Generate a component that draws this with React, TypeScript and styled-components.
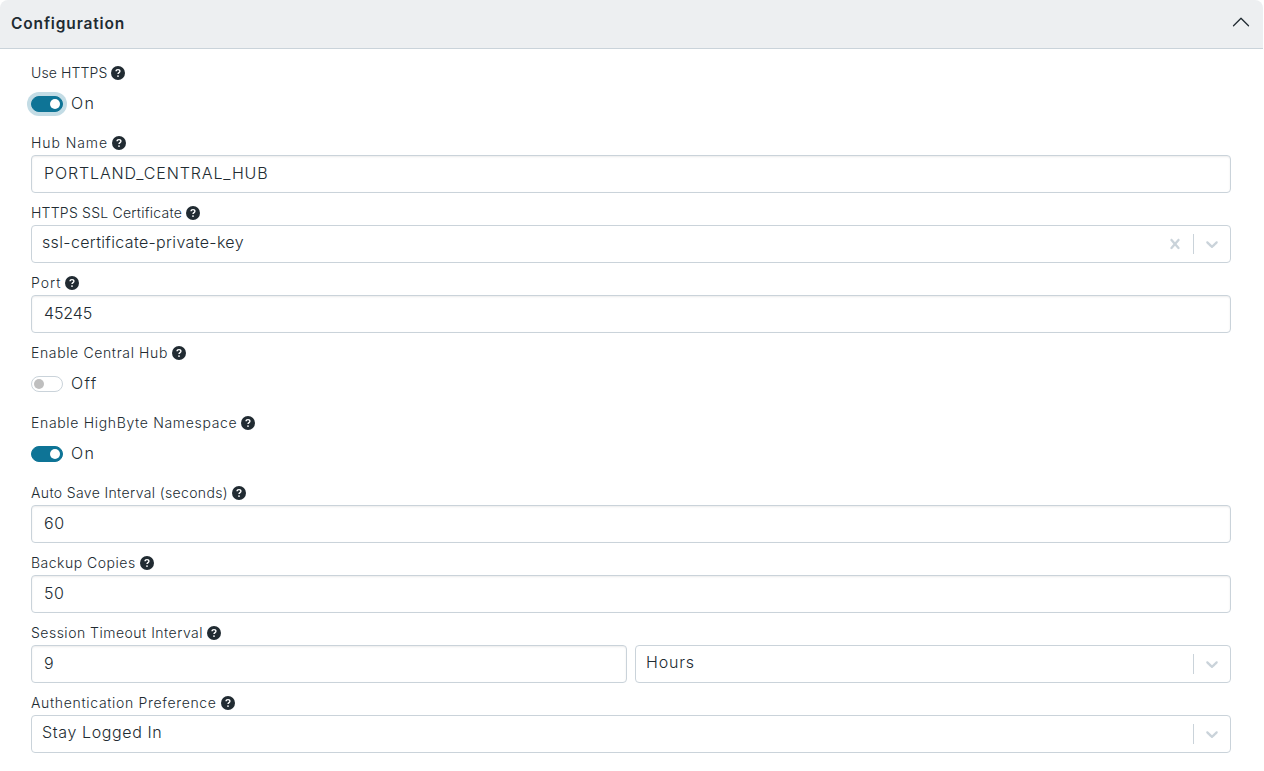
import { useState } from 'react';
import { BsChevronUp } from 'react-icons/bs';
import styled, { createGlobalStyle, css } from 'styled-components';

const BORDER = '#cad3da';
const TEXT = '#212b32';
const TEAL = '#0e7496';

interface ITracked {
  $tracking?: number;
}
interface ILabel {
  text: string;
  tracking: number;
}
interface ITextField {
  value: string;
  tracking: number;
}
interface ISelectField extends ITextField {
  clearable?: boolean;
}
interface IToggle {
  initial: boolean;
  focused?: boolean;
}

const GlobalStyle = createGlobalStyle`
  *, *::before, *::after {
    box-sizing: border-box;
  }
  body {
    margin: 0;
    background: #fff;
    color: ${TEXT};
    font-family: Inter, 'Open Sans', sans-serif;
    font-size: 16px;
    font-weight: 300;
    line-height: 24px;
  }
`;

const Panel = styled.section`
  width: 1263px;
`;

const PanelHeader = styled.header`
  display: flex;
  align-items: center;
  justify-content: space-between;
  height: 49px;
  padding: 0 12px 0 11px;
  border-bottom: 1px solid ${BORDER};
  border-radius: 8px 8px 0 0;
  background: #edeff1;
`;

const Title = styled.h2`
  margin: 0;
  font-size: 15.5px;
  font-weight: 600;
  letter-spacing: 0.85px;
`;

const CollapseIcon = styled(BsChevronUp)`
  width: 20px;
  height: 20px;
  margin-top: -5px;
`;

const PanelBody = styled.div`
  display: flex;
  flex-direction: column;
  gap: 10px;
  padding: 14px 32px 0 31px;
`;

const Field = styled.div`
  display: flex;
  flex-direction: column;
  gap: 2px;
`;

const LabelRow = styled.label<ITracked>`
  display: flex;
  align-items: center;
  gap: 4px;
  height: 20px;
  font-size: 14px;
  line-height: 20px;
  letter-spacing: ${(props) => props.$tracking}px;
`;

const HelpSvg = styled.svg`
  width: 14px;
  height: 14px;
  flex-shrink: 0;
`;

const controlBox = css`
  width: 100%;
  height: 38px;
  border: 1px solid ${BORDER};
  border-radius: 4px;
  background: #fff;
`;

const Input = styled.input<ITracked>`
  ${controlBox}
  padding: 0 12px 2px;
  box-shadow: inset 0 1px 2px rgba(0, 0, 0, 0.075);
  color: ${TEXT};
  font: inherit;
  letter-spacing: ${(props) => props.$tracking}px;
  outline: none;
`;

const SelectBox = styled.div`
  ${controlBox}
  display: flex;
  align-items: center;
`;

const SelectValue = styled.div<ITracked>`
  flex: 1;
  padding: 0 10px 4px;
  letter-spacing: ${(props) => props.$tracking}px;
`;

const Indicator = styled.div`
  display: flex;
  padding: 8px;
  color: ${BORDER};

  svg {
    width: 20px;
    height: 20px;
    fill: currentColor;
  }
`;

const Separator = styled.span`
  width: 1px;
  height: 20px;
  background: ${BORDER};
`;

const SplitRow = styled.div`
  display: grid;
  grid-template-columns: 1fr 1fr;
  gap: 8px;
`;

const SwitchRow = styled.div`
  display: flex;
  align-items: center;
  gap: 8px;
  height: 38px;
`;

const Track = styled.button<{ $on: boolean; $focused?: boolean }>`
  display: flex;
  align-items: center;
  justify-content: ${(props) => (props.$on ? 'flex-end' : 'flex-start')};
  width: 32px;
  height: 16px;
  padding: 0 1.75px;
  border: 1px solid ${(props) => (props.$on ? TEAL : BORDER)};
  border-radius: 16px;
  background: ${(props) => (props.$on ? TEAL : '#fff')};
  box-shadow: ${(props) => (props.$focused ? '0 0 0 4px #c3dce5' : 'none')};
  outline: none;
`;

const Knob = styled.span<{ $on: boolean }>`
  width: 10.5px;
  height: 10.5px;
  border-radius: 50%;
  background: ${(props) => (props.$on ? '#fff' : '#bfbfbf')};
`;

const SwitchText = styled.span`
  padding-bottom: 2px;
  letter-spacing: 1.3px;
`;

const HelpIcon: React.FC = () => {
  return (
    <HelpSvg viewBox="0 0 14 14">
      <circle cx="7" cy="7" r="7" fill="currentColor" />
      <path
        d="M5.1 5.2c0-1 .8-1.6 1.9-1.6s1.9.6 1.9 1.6c0 1.4-1.9 1.4-1.9 2.9"
        fill="none"
        stroke="#fff"
        strokeWidth="1.4"
      />
      <circle cx="7" cy="10.1" r="0.9" fill="#fff" />
    </HelpSvg>
  );
};

const Label: React.FC<ILabel> = ({ text, tracking }) => {
  return (
    <LabelRow $tracking={tracking}>
      {text}
      <HelpIcon />
    </LabelRow>
  );
};

const TextField: React.FC<ITextField> = ({ value, tracking }) => {
  return <Input defaultValue={value} $tracking={tracking} />;
};

const SelectField: React.FC<ISelectField> = ({
  value,
  tracking,
  clearable,
}) => {
  return (
    <SelectBox>
      <SelectValue $tracking={tracking}>{value}</SelectValue>
      {clearable && (
        <Indicator>
          <svg viewBox="0 0 20 20">
            <path d="M14.348 14.849c-0.469 0.469-1.229 0.469-1.697 0l-2.651-3.030-2.651 3.029c-0.469 0.469-1.229 0.469-1.697 0-0.469-0.469-0.469-1.229 0-1.697l2.758-3.15-2.759-3.152c-0.469-0.469-0.469-1.228 0-1.697s1.228-0.469 1.697 0l2.652 3.031 2.651-3.031c0.469-0.469 1.228-0.469 1.697 0s0.469 1.229 0 1.697l-2.758 3.152 2.758 3.15c0.469 0.469 0.469 1.229 0 1.698z" />
          </svg>
        </Indicator>
      )}
      <Separator />
      <Indicator>
        <svg viewBox="0 0 20 20">
          <path d="M4.516 7.548c0.436-0.446 1.043-0.481 1.576 0l3.908 3.747 3.908-3.747c0.533-0.481 1.141-0.446 1.574 0 0.436 0.445 0.408 1.197 0 1.615-0.406 0.418-4.695 4.502-4.695 4.502-0.217 0.223-0.502 0.335-0.787 0.335s-0.57-0.112-0.789-0.335c0 0-4.287-4.084-4.695-4.502s-0.436-1.17 0-1.615z" />
        </svg>
      </Indicator>
    </SelectBox>
  );
};

const Toggle: React.FC<IToggle> = ({ initial, focused }) => {
  const [on, setOn] = useState<boolean>(initial);

  return (
    <SwitchRow>
      <Track $on={on} $focused={focused} onClick={() => setOn(!on)}>
        <Knob $on={on} />
      </Track>
      <SwitchText>{on ? 'On' : 'Off'}</SwitchText>
    </SwitchRow>
  );
};

const App: React.FC = () => {
  return (
    <Panel>
      <GlobalStyle />
      <PanelHeader>
        <Title>Configuration</Title>
        <CollapseIcon />
      </PanelHeader>
      <PanelBody>
        <Field>
          <Label text="Use HTTPS" tracking={0.12} />
          <Toggle initial={true} focused />
        </Field>
        <Field>
          <Label text="Hub Name" tracking={0.93} />
          <TextField value="PORTLAND_CENTRAL_HUB" tracking={0.875} />
        </Field>
        <Field>
          <Label text="HTTPS SSL Certificate" tracking={0.23} />
          <SelectField
            value="ssl-certificate-private-key"
            tracking={0.35}
            clearable
          />
        </Field>
        <Field>
          <Label text="Port" tracking={0.98} />
          <TextField value="45245" tracking={-0.1} />
        </Field>
        <Field>
          <Label text="Enable Central Hub" tracking={0.63} />
          <Toggle initial={false} />
        </Field>
        <Field>
          <Label text="Enable HighByte Namespace" tracking={0.67} />
          <Toggle initial={true} />
        </Field>
        <Field>
          <Label text="Auto Save Interval (seconds)" tracking={0.364} />
          <TextField value="60" tracking={0.7} />
        </Field>
        <Field>
          <Label text="Backup Copies" tracking={0.5} />
          <TextField value="50" tracking={0.6} />
        </Field>
        <Field>
          <Label text="Session Timeout Interval" tracking={0.49} />
          <SplitRow>
            <TextField value="9" tracking={0} />
            <SelectField value="Hours" tracking={0.8} />
          </SplitRow>
        </Field>
        <Field>
          <Label text="Authentication Preference" tracking={0.67} />
          <SelectField value="Stay Logged In" tracking={0.62} />
        </Field>
      </PanelBody>
    </Panel>
  );
};

export default App;
